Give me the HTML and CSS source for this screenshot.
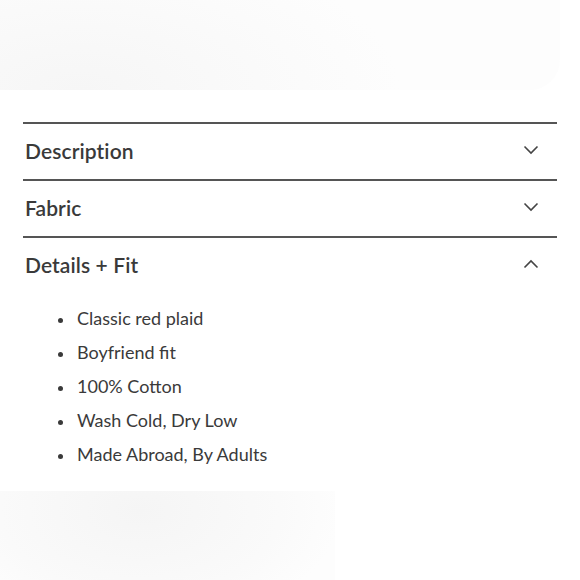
FILE: index.html
```html
<!DOCTYPE html>
<html>
<head>
<meta charset="utf-8">
<link rel="stylesheet" href="styles.css">
</head>
<body>
<div class="page">
  <div class="blur-top"></div>
  <div class="accordion">
    <div class="item">
      <div class="head"><span class="title">Description</span>
        <svg class="chev" width="16" height="10" viewBox="0 0 16 10"><path d="M1.5 1.5 L8 8 L14.5 1.5" fill="none" stroke="#444" stroke-width="1.6"/></svg>
      </div>
    </div>
    <div class="item">
      <div class="head"><span class="title">Fabric</span>
        <svg class="chev" width="16" height="10" viewBox="0 0 16 10"><path d="M1.5 1.5 L8 8 L14.5 1.5" fill="none" stroke="#444" stroke-width="1.6"/></svg>
      </div>
    </div>
    <div class="item open">
      <div class="head"><span class="title">Details + Fit</span>
        <svg class="chev" width="16" height="10" viewBox="0 0 16 10"><path d="M1.5 8.5 L8 2 L14.5 8.5" fill="none" stroke="#444" stroke-width="1.6"/></svg>
      </div>
      <ul class="list">
        <li>Classic red plaid</li>
        <li>Boyfriend fit</li>
        <li>100% Cotton</li>
        <li>Wash Cold, Dry Low</li>
        <li>Made Abroad, By Adults</li>
      </ul>
    </div>
  </div>
  <div class="blur-bottom"></div>
</div>
</body>
</html>
```
FILE: styles.css
```css
html, body {
  margin: 0;
  padding: 0;
  background: #fff;
}
.page {
  width: 580px;
  height: 580px;
  overflow: hidden;
  font-family: Lato, "Open Sans", sans-serif;
  color: #383838;
}
.blur-top {
  height: 90px;
  margin: 0 20px 0 0;
  border-radius: 0 0 30px 0;
  background: radial-gradient(ellipse 320px 150px at 80px 90px, #f6f6f6, #fbfbfb 70%, #fdfdfd);
}
.accordion {
  margin: 32px 23px 0 23px;
}
.item {
  border-top: 2px solid #555;
}
.head {
  height: 55px;
  box-sizing: border-box;
  display: flex;
  align-items: center;
  justify-content: space-between;
  padding: 0 18px 3px 2px;
}
.title {
  font-size: 21px;
  font-weight: 600;
  letter-spacing: 0.1px;
  color: #3a3a3a;
}
.chev {
  display: block;
}
.list {
  margin: 0;
  padding: 8px 0 0 51px;
  list-style: disc;
}
.list li {
  font-size: 18px;
  line-height: 34px;
  color: #3a3a3a;
  padding-left: 3px;
}
.list li::marker {
  font-size: 14px;
}
.blur-bottom {
  margin-top: 20px;
  width: 335px;
  height: 92px;
  background: radial-gradient(ellipse 200px 120px at 140px 20px, #f5f5f5, #fafafa 70%, #fdfdfd);
}
```
